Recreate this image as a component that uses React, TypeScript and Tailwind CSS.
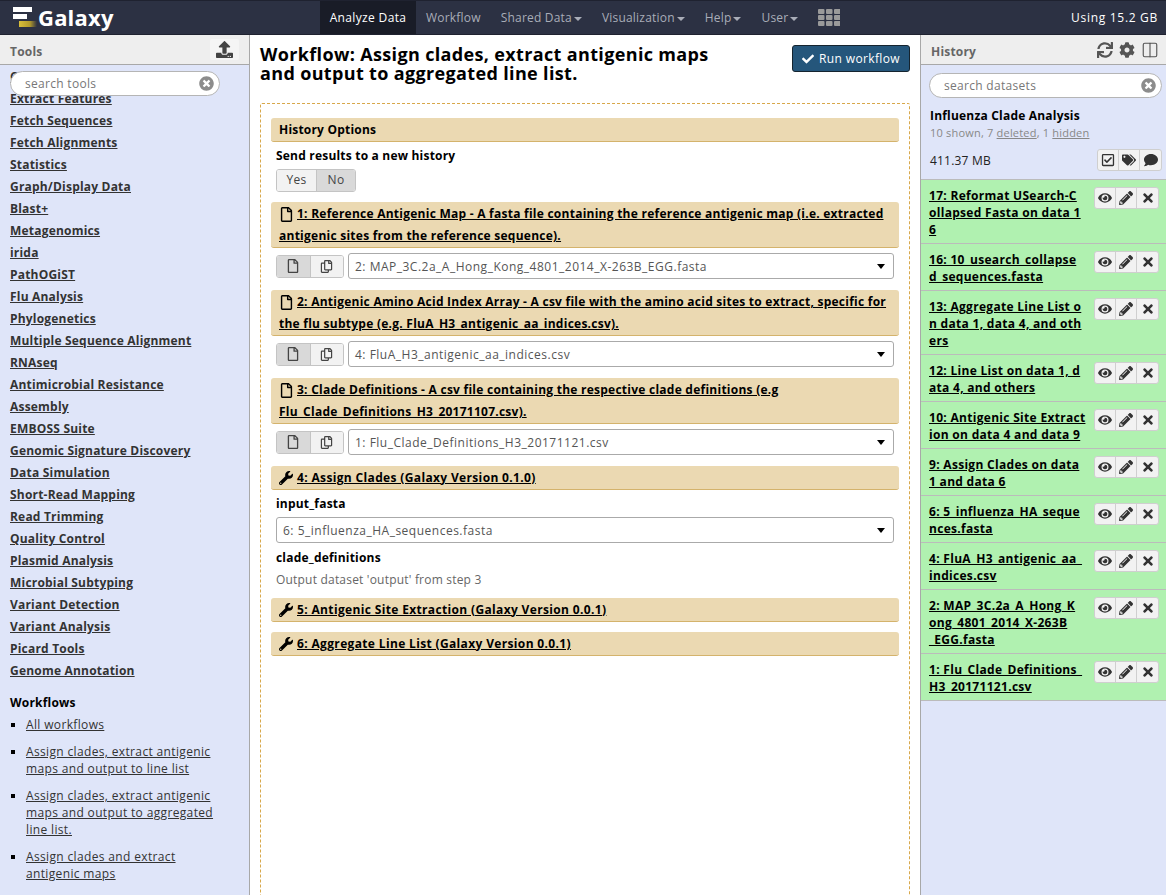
import {
  FaCheck,
  FaCog,
  FaComment,
  FaEye,
  FaPencilAlt,
  FaRegCheckSquare,
  FaRegCopy,
  FaRegFile,
  FaSync,
  FaTags,
  FaTimes,
  FaTimesCircle,
  FaUpload,
  FaWrench,
} from "react-icons/fa";
import { Columns2 } from "lucide-react";

const tools = [
  "Collection Operations",
  "Extract Features",
  "Fetch Sequences",
  "Fetch Alignments",
  "Statistics",
  "Graph/Display Data",
  "Blast+",
  "Metagenomics",
  "irida",
  "PathOGiST",
  "Flu Analysis",
  "Phylogenetics",
  "Multiple Sequence Alignment",
  "RNAseq",
  "Antimicrobial Resistance",
  "Assembly",
  "EMBOSS Suite",
  "Genomic Signature Discovery",
  "Data Simulation",
  "Short-Read Mapping",
  "Read Trimming",
  "Quality Control",
  "Plasmid Analysis",
  "Microbial Subtyping",
  "Variant Detection",
  "Variant Analysis",
  "Picard Tools",
  "Genome Annotation",
];

const workflows = [
  ["All workflows"],
  ["Assign clades, extract antigenic", "maps and output to line list"],
  ["Assign clades, extract antigenic", "maps and output to aggregated", "line list."],
  ["Assign clades and extract", "antigenic maps"],
];

const datasets = [
  ["17: Reformat USearch-C", "ollapsed Fasta on data 1", "6"],
  ["16: 10_usearch_collapse", "d_sequences.fasta"],
  ["13: Aggregate Line List o", "n data 1, data 4, and oth", "ers"],
  ["12: Line List on data 1, d", "ata 4, and others"],
  ["10: Antigenic Site Extract", "ion on data 4 and data 9"],
  ["9: Assign Clades on data", "1 and data 6"],
  ["6: 5_influenza_HA_seque", "nces.fasta"],
  ["4: FluA_H3_antigenic_aa_", "indices.csv"],
  ["2: MAP_3C.2a_A_Hong_K", "ong_4801_2014_X-263B", "_EGG.fasta"],
  ["1: Flu_Clade_Definitions_", "H3_20171121.csv"],
];

const NavItem = ({ label, caret }: { label: string; caret?: boolean }) => (
  <div className="flex items-center px-[10px] tracking-[0.2px] text-[#a9adb8]">
    {label}
    {caret && (
      <span className="ml-[2px] mt-[2px] border-x-[4px] border-t-[4px] border-x-transparent border-t-[#a9adb8]" />
    )}
  </div>
);

const Logo = () => (
  <svg width="26" height="22" viewBox="0 0 26 22">
    <defs>
      <linearGradient id="gold" x1="0" x2="1" y1="0" y2="0">
        <stop offset="0" stopColor="#d9bf3a" />
        <stop offset="0.6" stopColor="#b39b2c" />
        <stop offset="1" stopColor="#2c3143" />
      </linearGradient>
    </defs>
    <rect x="0" y="0" width="19" height="5" fill="#fff" />
    <rect x="0" y="7" width="14" height="5" fill="#fff" />
    <rect x="6" y="14" width="18" height="6" fill="url(#gold)" />
  </svg>
);

const GridIcon = () => (
  <svg width="22" height="17" viewBox="0 0 22 17" fill="#9a9a9a">
    {[0, 6, 12].map((y) =>
      [0, 8, 16].map((x) => <rect key={`${x}-${y}`} x={x} y={y} width="6.5" height="5" rx="1" />)
    )}
  </svg>
);

const SearchBox = ({ text }: { text: string }) => (
  <div className="flex h-[25px] items-center rounded-full border border-[#b5b5b5] bg-white pl-[14px] pr-[5px] text-[12px] tracking-[0.3px] text-[#777]">
    <span className="flex-1">{text}</span>
    <FaTimesCircle className="text-[15px] text-[#8c8c8c]" />
  </div>
);

const PanelHeader = ({ title, children }: { title: string; children: React.ReactNode }) => (
  <div className="flex h-[30px] shrink-0 items-center justify-between border-b border-[#a8a8a8] bg-[#eeeeee] pl-[10px] pr-[11px] text-[12px] font-bold tracking-[0.2px] text-[#666]">
    <span className="mt-[4px]">{title}</span>
    {children}
  </div>
);

const Portlet = ({ children, className = "" }: { children: React.ReactNode; className?: string }) => (
  <div className={`rounded-[3px] border-b border-[#d4b36c] bg-[#ebd9b2] px-[8px] text-[12px] font-bold leading-[22px] text-black ${className}`}>
    {children}
  </div>
);

const StepHeader = ({ first, second }: { first: string; second?: string }) => (
  <Portlet className="h-[46px] pt-[1px] tracking-[0.25px]">
    <div className="flex items-center">
      <FaRegFile className="mr-[3px] text-[15px]" />
      <span className="underline">{first}</span>
    </div>
    {second && <div className="underline">{second}</div>}
  </Portlet>
);

const ToolHeader = ({ label }: { label: string }) => (
  <Portlet className="flex h-[24px] items-center tracking-[0.35px]">
    <FaWrench className="mr-[4px] text-[14px]" />
    <span className="underline">{label}</span>
  </Portlet>
);

const Select = ({ value }: { value: string }) => (
  <div className="flex h-[26px] flex-1 items-center justify-between rounded-[3px] border border-[#aaa] bg-white pl-[6px] pr-[8px] text-[12px] tracking-[0.5px] text-[#555]">
    <span className="mt-[1px]">{value}</span>
    <span className="border-x-[4px] border-t-[5px] border-x-transparent border-t-black" />
  </div>
);

const DataRow = ({ value }: { value: string }) => (
  <div className="mx-[5px] mb-[11px] mt-[5px] flex gap-[4px]">
    <div className="flex h-[23px] w-[68px] shrink-0 self-center overflow-hidden rounded-[3px] border border-[#c4c4c4] text-[#444]">
      <div className="flex flex-1 items-center justify-center border-r border-[#c4c4c4] bg-[#d9d9d9]">
        <FaRegFile className="text-[14px]" />
      </div>
      <div className="flex flex-1 items-center justify-center bg-[#f2f2f2]">
        <FaRegCopy className="text-[13px]" />
      </div>
    </div>
    <Select value={value} />
  </div>
);

const IconGroup = ({ icons }: { icons: React.ReactNode[] }) => (
  <div className="flex h-[22px] shrink-0 overflow-hidden rounded-[3px] border border-[#cfcfcf] bg-[#f2f2f2] text-[14px] text-[#333]">
    {icons.map((icon, i) => (
      <div
        key={i}
        className="flex w-[21px] items-center justify-center border-r border-[#cfcfcf] last:border-r-0"
      >
        {icon}
      </div>
    ))}
  </div>
);

export default function App() {
  return (
    <div className="flex h-screen flex-col overflow-hidden bg-white font-['Open_Sans',sans-serif] text-[12px] tracking-[0.35px]">
      <header className="flex h-[35px] shrink-0 items-stretch border-y border-[#1f2230] bg-[#2c3143] text-[12px]">
        <div className="flex w-[320px] items-center pl-[13px]">
          <Logo />
          <span className="ml-[-1px] text-[22px] font-bold tracking-[0.2px] text-white">Galaxy</span>
        </div>
        <div className="flex w-[96px] items-center justify-center bg-[#191c27] text-white">Analyze Data</div>
        <NavItem label="Workflow" />
        <NavItem label="Shared Data" caret />
        <NavItem label="Visualization" caret />
        <NavItem label="Help" caret />
        <NavItem label="User" caret />
        <div className="flex items-center px-[10px]">
          <GridIcon />
        </div>
        <div className="ml-auto flex items-center pr-[8px] tracking-[0.7px] text-white">Using 15.2 GB</div>
      </header>

      <div className="flex min-h-0 flex-1">
        <aside className="flex w-[250px] shrink-0 flex-col border-r border-[#a8a8a8] bg-[#dfe5f9]">
          <PanelHeader title="Tools">
            <div className="mr-[-1px] flex h-[21px] w-[29px] items-center justify-center rounded-[2px] bg-[#f5f5f5] text-[17px] text-[#444]">
              <FaUpload />
            </div>
          </PanelHeader>
          <div className="relative min-h-0 flex-1 overflow-hidden pl-[10px]">
            <div className="absolute left-[10px] top-[6px] w-[210px]">
              <SearchBox text="search tools" />
            </div>
            <div className="pt-[1px]">
              {tools.map((t) => (
                <div key={t} className="h-[22px] font-bold leading-[22px] tracking-[0.2px] text-[#333]">
                  <span className="underline">{t}</span>
                </div>
              ))}
            </div>
            <div className="mt-[10px] font-bold leading-[22px] tracking-[0.2px] text-black">Workflows</div>
            <ul className="mt-[2px] pr-[30px]">
              {workflows.map((lines) => (
                <li key={lines[0]} className="mb-[10px] flex leading-[17px] text-[#333]">
                  <span className="ml-[1px] mr-[11px] mt-[7px] h-[4px] w-[4px] shrink-0 bg-black" />
                  <div>
                    {lines.map((l) => (
                      <div key={l} className="underline">
                        {l}
                      </div>
                    ))}
                  </div>
                </li>
              ))}
            </ul>
          </div>
        </aside>

        <main className="min-w-0 flex-1 pl-[10px] pr-[10px]">
          <div className="flex h-[68px] items-start justify-between pt-[9px]">
            <h1 className="mt-[1px] w-[470px] text-[18px] font-bold leading-[19px] tracking-[0.35px] text-black">
              Workflow: Assign clades, extract antigenic maps and output to aggregated line list.
            </h1>
            <button className="mt-[1px] flex h-[27px] w-[118px] items-center justify-center gap-[5px] rounded-[3px] border border-[#15242f] bg-[#25567b] text-white">
              <FaCheck className="text-[12px]" />
              Run workflow
            </button>
          </div>
          <div className="h-[900px] rounded-[2px] border border-dashed border-[#d8a84a] px-[10px] pt-[14px]">
            <Portlet className="flex h-[24px] items-center tracking-[0.2px]">History Options</Portlet>
            <div className="mx-[5px] mt-[5px] font-bold leading-[18px] tracking-[0.2px] text-black">Send results to a new history</div>
            <div className="mx-[5px] mb-[10px] mt-[4px] flex h-[23px] w-[80px] overflow-hidden rounded-[3px] border border-[#c4c4c4] pb-0 text-[#444]">
              <div className="flex flex-1 items-center justify-center border-r border-[#c4c4c4] bg-[#f2f2f2] pb-[2px]">Yes</div>
              <div className="flex w-[38px] items-center justify-center bg-[#d9d9d9] pb-[2px]">No</div>
            </div>
            <StepHeader
              first="1: Reference Antigenic Map - A fasta file containing the reference antigenic map (i.e. extracted"
              second="antigenic sites from the reference sequence)."
            />
            <DataRow value="2: MAP_3C.2a_A_Hong_Kong_4801_2014_X-263B_EGG.fasta" />
            <StepHeader
              first="2: Antigenic Amino Acid Index Array - A csv file with the amino acid sites to extract, specific for"
              second="the flu subtype (e.g. FluA_H3_antigenic_aa_indices.csv)."
            />
            <DataRow value="4: FluA_H3_antigenic_aa_indices.csv" />
            <StepHeader
              first="3: Clade Definitions - A csv file containing the respective clade definitions (e.g"
              second="Flu_Clade_Definitions_H3_20171107.csv)."
            />
            <DataRow value="1: Flu_Clade_Definitions_H3_20171121.csv" />
            <ToolHeader label="4: Assign Clades (Galaxy Version 0.1.0)" />
            <div className="mx-[5px] mt-[5px] font-bold leading-[18px] tracking-[0.2px] text-black">input_fasta</div>
            <div className="mx-[5px] mt-[4px] flex">
              <Select value="6: 5_influenza_HA_sequences.fasta" />
            </div>
            <div className="mx-[5px] mt-[6px] font-bold leading-[18px] tracking-[0.2px] text-black">clade_definitions</div>
            <div className="mx-[5px] mb-[9px] mt-[4px] leading-[18px] tracking-[0.2px] text-[#666]">Output dataset 'output' from step 3</div>
            <ToolHeader label="5: Antigenic Site Extraction (Galaxy Version 0.0.1)" />
            <div className="h-[10px]" />
            <ToolHeader label="6: Aggregate Line List (Galaxy Version 0.0.1)" />
          </div>
        </main>

        <aside className="flex w-[246px] shrink-0 flex-col border-l border-[#a8a8a8] bg-[#dfe5f9]">
          <PanelHeader title="History">
            <div className="mr-[-4px] flex items-center gap-[6px] text-[16px] text-[#555]">
              <FaSync />
              <FaCog />
              <Columns2 size={18} strokeWidth={1.5} />
            </div>
          </PanelHeader>
          <div className="min-h-0 flex-1 overflow-hidden">
            <div className="border-b border-[#bbbbbb] px-[8px] pb-[8px] pt-[8px]">
              <div className="mr-[-4px]">
                <SearchBox text="search datasets" />
              </div>
              <div className="mt-[9px] px-[1px] font-bold leading-[18px] tracking-[0.2px] text-black">Influenza Clade Analysis</div>
              <div className="px-[1px] text-[11px] leading-[15px] tracking-[0.2px] text-[#888]">
                10 shown, 7 <span className="underline">deleted</span>, 1 <span className="underline">hidden</span>
              </div>
              <div className="mt-[9px] flex items-center justify-between pl-[1px]">
                <span className="mt-[2px] tracking-[0.2px] text-[#222]">411.37 MB</span>
                <div className="mr-[-4px]">
                  <IconGroup icons={[<FaRegCheckSquare />, <FaTags />, <FaComment />]} />
                </div>
              </div>
            </div>
            {datasets.map((lines) => (
              <div
                key={lines[0]}
                className="flex justify-between border-b border-[#bbbbbb] bg-[#b0f1b0] pb-[5px] pl-[8px] pr-[7px] pt-[7px]"
              >
                <div className="font-bold leading-[17px] tracking-[0.3px] text-black">
                  {lines.map((l) => (
                    <div key={l} className="underline">
                      {l}
                    </div>
                  ))}
                </div>
                <IconGroup icons={[<FaEye />, <FaPencilAlt />, <FaTimes />]} />
              </div>
            ))}
          </div>
        </aside>
      </div>
    </div>
  );
}
